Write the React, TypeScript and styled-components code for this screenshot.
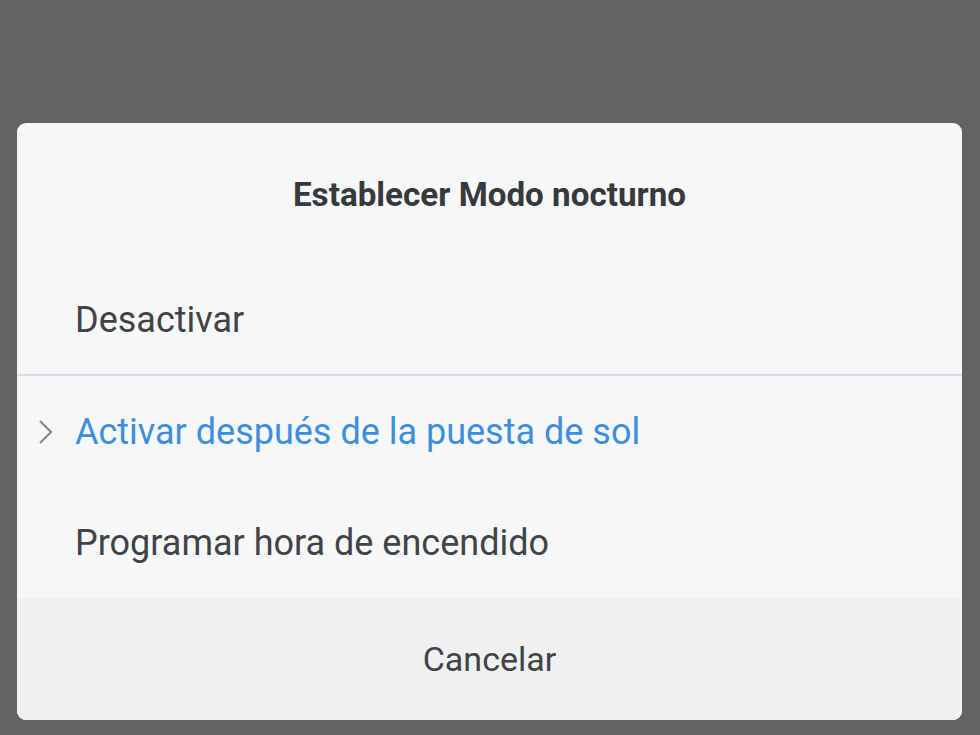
import React from "react";
import styled, { createGlobalStyle } from "styled-components";

const Global = createGlobalStyle`
  html, body { margin: 0; padding: 0; background: #636363; }
  body { font-family: Roboto, "Noto Sans", sans-serif; }
`;

const Screen = styled.div`
  width: 980px;
  height: 735px;
  background: #636363;
  padding: 123px 18px 0 17px;
  box-sizing: border-box;
`;

const Dialog = styled.div`
  background: #f6f7f9;
  border-radius: 9px;
  overflow: hidden;
  display: flex;
  flex-direction: column;
`;

const Title = styled.div`
  height: 143px;
  display: flex;
  align-items: center;
  justify-content: center;
  padding-bottom: 1px;
  box-sizing: border-box;
  font-weight: 700;
  font-size: 33.2px;
  color: #37393c;
`;

const Option = styled.div<{ $active?: boolean; $h: number }>`
  height: ${(p) => p.$h}px;
  display: flex;
  align-items: center;
  position: relative;
  padding-left: 58px;
  font-size: 36px;
  color: ${(p) => (p.$active ? "#3e8ede" : "#414346")};
`;

const Chevron = styled.svg`
  position: absolute;
  left: 21px;
  top: 50%;
  transform: translateY(-50%);
`;

const Divider = styled.div`
  height: 2px;
  background: #dcdde0;
`;

const Footer = styled.div`
  height: 122px;
  background: #eff0f2;
  display: flex;
  align-items: center;
  justify-content: center;
  font-size: 34px;
  color: #414346;
`;

export default function App() {
  return (
    <>
      <Global />
      <Screen>
        <Dialog>
          <Title>Establecer Modo nocturno</Title>
          <Option $h={108}>Desactivar</Option>
          <Divider />
          <Option $h={111} $active>
            <Chevron width="16" height="26" viewBox="0 0 16 26">
              <path d="M2 2 L13 13 L2 24" fill="none" stroke="#7d8a99" strokeWidth="2.2" />
            </Chevron>
            Activar después de la puesta de sol
          </Option>
          <Option $h={111}>Programar hora de encendido</Option>
          <Footer>Cancelar</Footer>
        </Dialog>
      </Screen>
    </>
  );
}
